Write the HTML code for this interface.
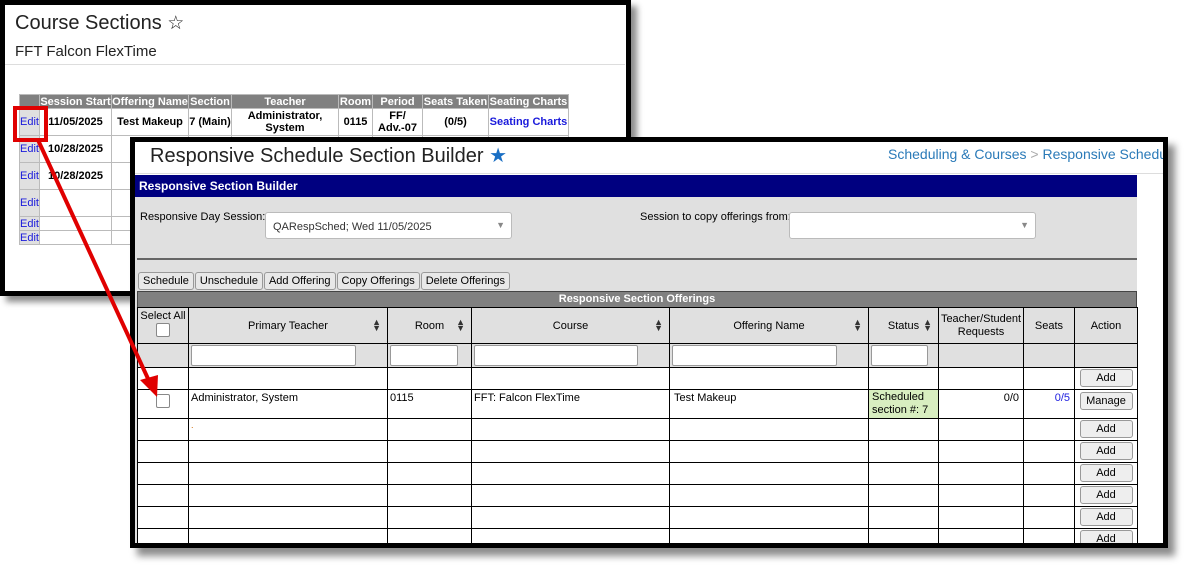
<!DOCTYPE html>
<html><head><meta charset="utf-8"><style>
*{box-sizing:border-box;margin:0;padding:0}
body{width:1192px;height:573px;background:#fff;position:relative;overflow:hidden;font-family:"Liberation Sans",Arial,sans-serif}
.abs{position:absolute}
.w1{left:0;top:0;width:631px;height:296px;background:#fff;border:5px solid #000;box-shadow:6px 6px 6px rgba(0,0,0,.45)}
.w2{left:130px;top:137px;width:1038px;height:411px;background:#fff;border:5px solid #000;box-shadow:7px 8px 7px rgba(0,0,0,.45);overflow:hidden}
table{border-collapse:collapse;table-layout:fixed}
.t1 td,.t1 th{border:1px solid #bbb;font-size:11px;text-align:center;padding:0;overflow:hidden;white-space:nowrap;line-height:12px}
.t1 th{background:#808080;color:#fff;font-weight:bold;height:14px}
.t1 td{font-weight:bold;color:#000}
.t1 td.e{background:#e0e0e0;color:#1a1adb;font-weight:normal;font-size:11px}
.t2 td,.t2 th{border:1px solid #000;font-size:11px;padding:0;overflow:hidden;white-space:nowrap;vertical-align:top}
.t2 th{background:#e0e0e0;font-weight:normal;text-align:center;vertical-align:middle;position:relative}
.srt{position:absolute;right:6px;top:11px;font-size:9px;line-height:6px;color:#333}
.inp{display:block;height:21px;border:1px solid #999;background:#fff;border-radius:2px;margin:1px 2px}
.btn{display:inline-block;height:18px;border:1px solid #999;border-radius:3px;background:#e8e8e8;font-size:11px;line-height:16px;padding:0 4px;margin-right:1px}
.add{display:block;margin:1px auto 0;width:53px;height:18px;border:1px solid #999;border-radius:3px;background:#eee;font-size:11px;text-align:center;line-height:16px}
.cb{display:inline-block;width:14px;height:14px;border:1px solid #888;border-radius:2px;background:#fff}
</style></head><body>
<div class="abs w1">
 <div class="abs" style="left:10px;top:7px;font-size:20px;color:#222">Course Sections <span style="font-size:19px">☆</span></div>
 <div class="abs" style="left:10px;top:38px;font-size:15px;color:#222">FFT Falcon FlexTime</div>
 <div class="abs" style="left:0;top:59px;width:620px;height:1px;background:#ddd"></div>
 <table class="t1 abs" style="left:14px;top:89px;width:549px">
  <colgroup><col style="width:20px"><col style="width:72px"><col style="width:77px"><col style="width:43px"><col style="width:107px"><col style="width:34px"><col style="width:50px"><col style="width:66px"><col style="width:80px"></colgroup>
  <tr><th></th><th>Session Start</th><th>Offering Name</th><th>Section</th><th>Teacher</th><th>Room</th><th>Period</th><th>Seats Taken</th><th>Seating Charts</th></tr>
  <tr style="height:27px"><td class="e">Edit</td><td>11/05/2025</td><td>Test Makeup</td><td>7 (Main)</td><td>Administrator,<br>System</td><td>0115</td><td>FF/<br>Adv.-07</td><td>(0/5)</td><td style="color:#1a1adb">Seating Charts</td></tr>
  <tr style="height:27px"><td class="e">Edit</td><td>10/28/2025</td><td></td><td></td><td></td><td></td><td></td><td></td><td></td></tr>
  <tr style="height:27px"><td class="e">Edit</td><td>10/28/2025</td><td></td><td></td><td></td><td></td><td></td><td></td><td></td></tr>
  <tr style="height:27px"><td class="e">Edit</td><td></td><td></td><td></td><td></td><td></td><td></td><td></td><td></td></tr>
  <tr style="height:14px"><td class="e">Edit</td><td></td><td></td><td></td><td></td><td></td><td></td><td></td><td></td></tr>
  <tr style="height:14px"><td class="e">Edit</td><td></td><td></td><td></td><td></td><td></td><td></td><td></td><td></td></tr>
 </table>
</div>
<div class="abs" style="left:13px;top:106px;width:35px;height:36px;border:4px solid #e00000"></div>

<div class="abs w2">
 <div class="abs" style="left:15px;top:1px;font-size:20px;color:#222">Responsive Schedule Section Builder <span style="color:#1a6fc4">★</span></div>
 <div class="abs" style="left:753px;top:4px;font-size:14px;color:#2a7ab8;white-space:nowrap">Scheduling &amp; Courses <span style="color:#aaa">&gt;</span> Responsive Schedule Section Builder</div>
 <div class="abs" style="left:0;top:31px;width:1030px;height:1px;background:#ddd"></div>
 <div class="abs" style="left:0;top:33px;width:1002px;height:22px;background:#000080;color:#fff;font-weight:bold;font-size:12px;line-height:22px;padding-left:4px">Responsive Section Builder</div>
 <div class="abs" style="left:0;top:55px;width:1002px;height:360px;background:#e0e0e0"></div>
 <div class="abs" style="left:5px;top:69px;font-size:11px">Responsive Day Session:</div>
 <div class="abs" style="left:130px;top:70px;width:247px;height:27px;background:#fff;border:1px solid #bbb;border-radius:3px;font-size:11px;color:#333;padding:8px 0 0 7px">QARespSched; Wed 11/05/2025<span style="position:absolute;right:6px;top:7px;color:#888;font-size:9px">▼</span></div>
 <div class="abs" style="left:505px;top:69px;font-size:11px">Session to copy offerings from:</div>
 <div class="abs" style="left:654px;top:70px;width:247px;height:27px;background:#fff;border:1px solid #bbb;border-radius:3px"><span style="position:absolute;right:6px;top:7px;color:#888;font-size:9px">▼</span></div>
 <div class="abs" style="left:2px;top:116px;width:1000px;height:2px;background:#666"></div>
 <div class="abs" style="left:3px;top:129px;white-space:nowrap"><span class="btn">Schedule</span><span class="btn">Unschedule</span><span class="btn">Add Offering</span><span class="btn">Copy Offerings</span><span class="btn">Delete Offerings</span></div>
 <div class="abs" style="left:2px;top:149px;width:1000px;height:17px;background:#808080;border:1px solid #444;color:#fff;font-weight:bold;font-size:11px;text-align:center;line-height:15px">Responsive Section Offerings</div>
 <table class="t2 abs" style="left:2px;top:165px;width:1000px;background:#fff">
  <colgroup><col style="width:51px"><col style="width:199px"><col style="width:84px"><col style="width:198px"><col style="width:199px"><col style="width:70px"><col style="width:85px"><col style="width:51px"><col style="width:63px"></colgroup>
  <tr style="height:36px"><th style="vertical-align:top;padding-top:2px">Select All<br><span class="cb" style="margin-top:1px"></span></th><th>Primary Teacher<span class="srt">▲<br>▼</span></th><th>Room<span class="srt">▲<br>▼</span></th><th>Course<span class="srt">▲<br>▼</span></th><th>Offering Name<span class="srt">▲<br>▼</span></th><th>Status<span class="srt">▲<br>▼</span></th><th style="line-height:13px">Teacher/Student<br>Requests</th><th>Seats</th><th>Action</th></tr>
  <tr style="height:24px;background:#e0e0e0"><td></td><td><span class="inp" style="width:165px"></span></td><td><span class="inp" style="width:68px"></span></td><td><span class="inp" style="width:164px"></span></td><td><span class="inp" style="width:165px"></span></td><td><span class="inp" style="width:57px"></span></td><td></td><td></td><td></td></tr>
  <tr style="height:22px"><td></td><td></td><td></td><td></td><td></td><td></td><td></td><td></td><td><span class="add">Add</span></td></tr>
  <tr style="height:29px"><td style="text-align:center;padding-top:4px"><span class="cb"></span></td><td style="padding:2px 2px">Administrator, System</td><td style="padding:2px 2px">0115</td><td style="padding:2px 2px">FFT: Falcon FlexTime</td><td style="padding:2px 4px">Test Makeup</td><td style="background:#d8eec0;padding:1px 3px;line-height:13px">Scheduled<br>section #: 7</td><td style="text-align:right;padding:2px 4px">0/0</td><td style="text-align:right;padding:2px 4px;color:#2020e0">0/5</td><td><span class="add" style="margin-top:2px">Manage</span></td></tr>
  <tr style="height:22px"><td></td><td><span style="color:#c60;font-size:9px;padding-left:2px">.</span></td><td></td><td></td><td></td><td></td><td></td><td></td><td><span class="add">Add</span></td></tr>
  <tr style="height:22px"><td></td><td></td><td></td><td></td><td></td><td></td><td></td><td></td><td><span class="add">Add</span></td></tr>
  <tr style="height:22px"><td></td><td></td><td></td><td></td><td></td><td></td><td></td><td></td><td><span class="add">Add</span></td></tr>
  <tr style="height:22px"><td></td><td></td><td></td><td></td><td></td><td></td><td></td><td></td><td><span class="add">Add</span></td></tr>
  <tr style="height:22px"><td></td><td></td><td></td><td></td><td></td><td></td><td></td><td></td><td><span class="add">Add</span></td></tr>
  <tr style="height:22px"><td></td><td></td><td></td><td></td><td></td><td></td><td></td><td></td><td><span class="add">Add</span></td></tr>
 </table>
</div>
<svg class="abs" style="left:0;top:0" width="1192" height="573">
 <line x1="38" y1="140" x2="150" y2="383" stroke="#e00000" stroke-width="4"/>
 <polygon points="157,397 140,380 158,375" fill="#e00000"/>
</svg>
</body></html>
